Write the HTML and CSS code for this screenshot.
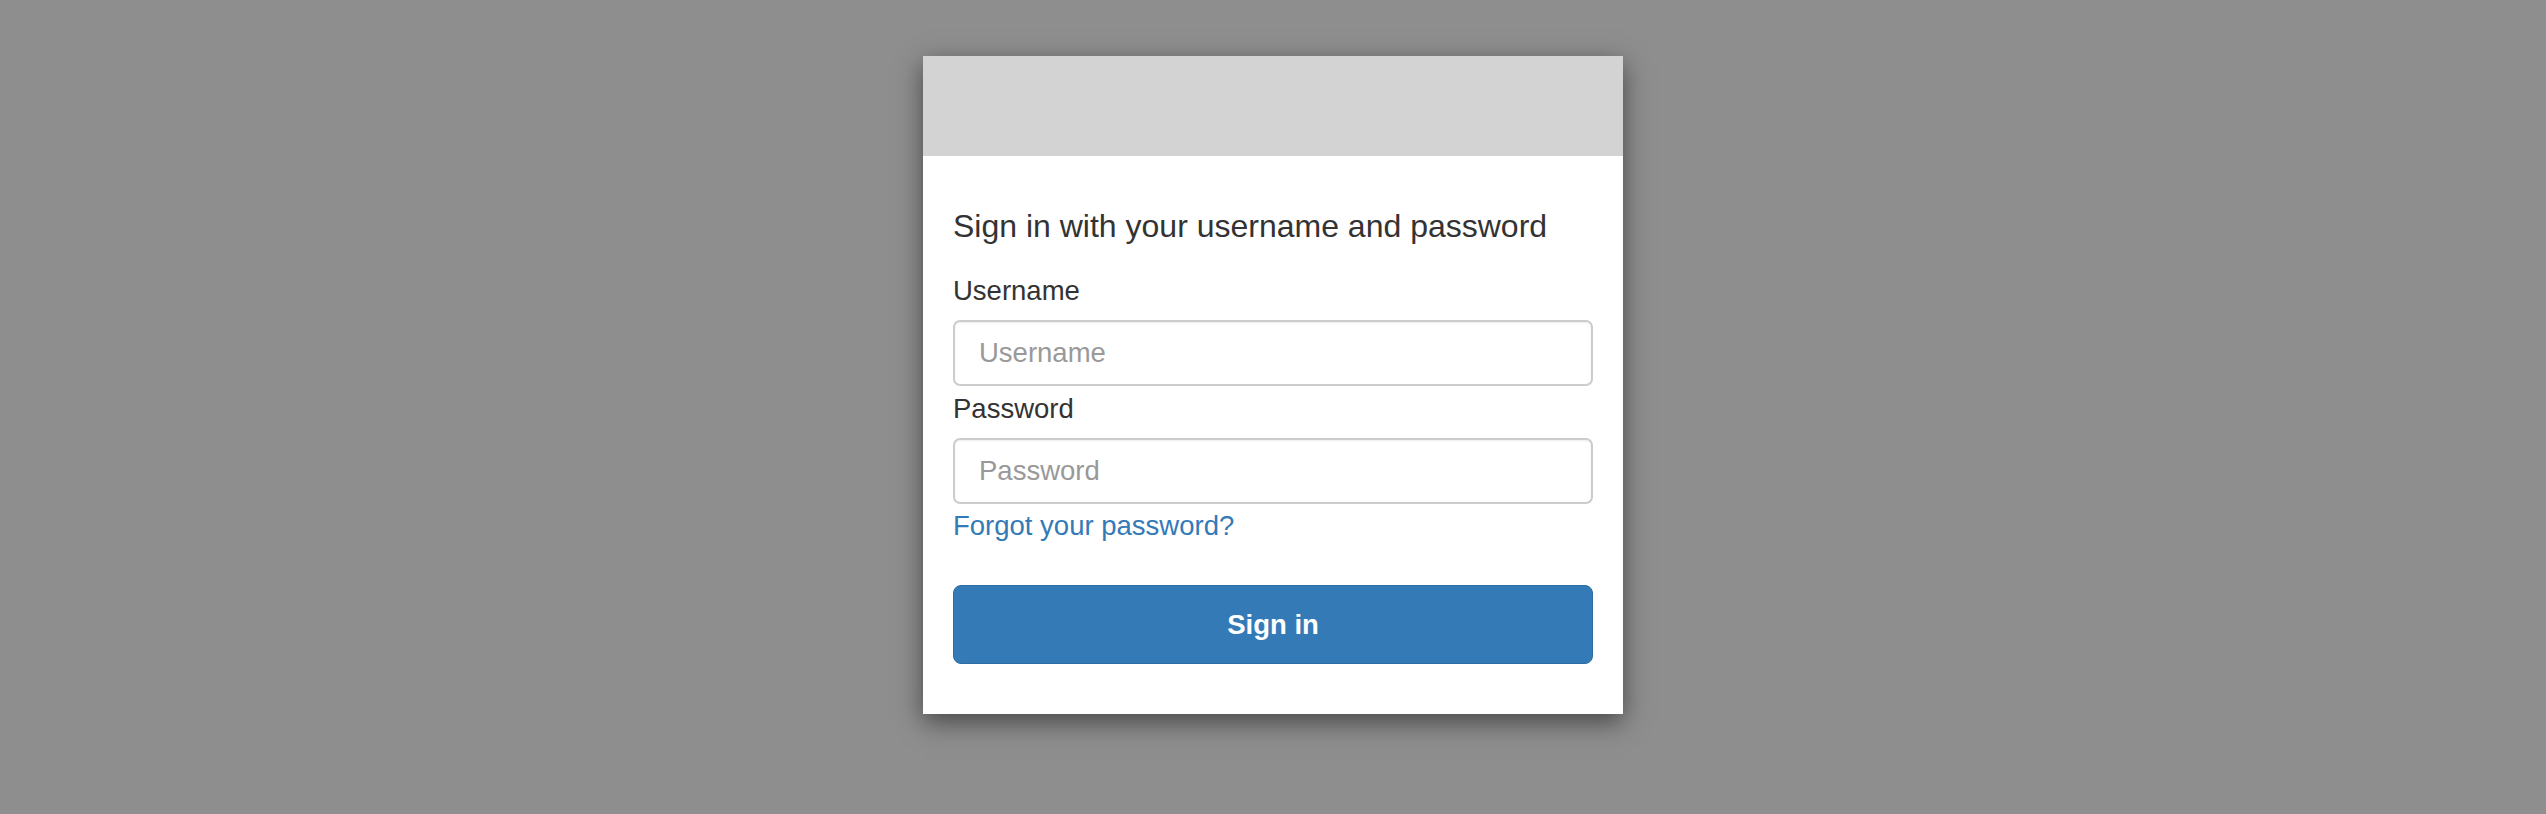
FILE: index.html
```html
<!DOCTYPE html>
<html lang="en">

<head>
    <meta charset="UTF-8">
    <meta name="viewport" content="width=device-width, initial-scale=1.0">
    <title>Sign in</title>
    <link rel="stylesheet" href="styles.css">
</head>

<body>
    <div class="modal">
        <div class="banner"></div>
        <div class="modal-body">
            <h1 class="title">Sign in with your username and password</h1>
            <form class="login-form">
                <label for="username">Username</label>
                <input id="username" class="field" type="text" placeholder="Username">
                <label for="password">Password</label>
                <input id="password" class="field" type="password" placeholder="Password">
                <a class="forgot" href="#">Forgot your password?</a>
                <button class="btn-primary" type="button">Sign in</button>
            </form>
        </div>
    </div>
</body>

</html>
```
FILE: styles.css
```css
body {
    box-sizing: border-box;
    margin: 0;
    padding-top: 56px;
    height: 814px;
    overflow: hidden;
    background-color: #8e8e8e;
    font-family: "Liberation Sans", Arial, sans-serif;
    color: #333;
}

.modal {
    width: 700px;
    margin: 0 auto;
    background-color: #fff;
    box-shadow: 0 8px 24px rgba(0, 0, 0, 0.5);
}

.banner {
    height: 100px;
    background-color: #d3d3d3;
}

.modal-body {
    padding: 52px 30px 50px;
}

.title {
    margin: 0 0 30px;
    font-size: 32px;
    line-height: 36px;
    font-weight: normal;
    color: #333;
}

.login-form {
    display: flex;
    flex-direction: column;
}

.login-form label {
    font-size: 27.5px;
    line-height: 33px;
    margin-bottom: 13px;
}

.field {
    box-sizing: border-box;
    height: 66px;
    margin: 0 0 6px;
    padding: 0 24px;
    border: 2px solid #ccc;
    border-radius: 7px;
    box-shadow: inset 0 1px 2px rgba(0, 0, 0, 0.08);
    font-family: inherit;
    font-size: 27.5px;
    color: #555;
    outline: none;
}

.field::placeholder {
    color: #999;
}

.forgot {
    margin-top: -1px;
    font-size: 27.5px;
    line-height: 33px;
    color: #337ab7;
    text-decoration: none;
    align-self: flex-start;
}

.btn-primary {
    margin-top: 43px;
    height: 79px;
    border: 1px solid #2e6da4;
    border-radius: 8px;
    background-color: #337ab7;
    color: #fff;
    font-family: inherit;
    font-size: 27.5px;
    font-weight: bold;
}
```
